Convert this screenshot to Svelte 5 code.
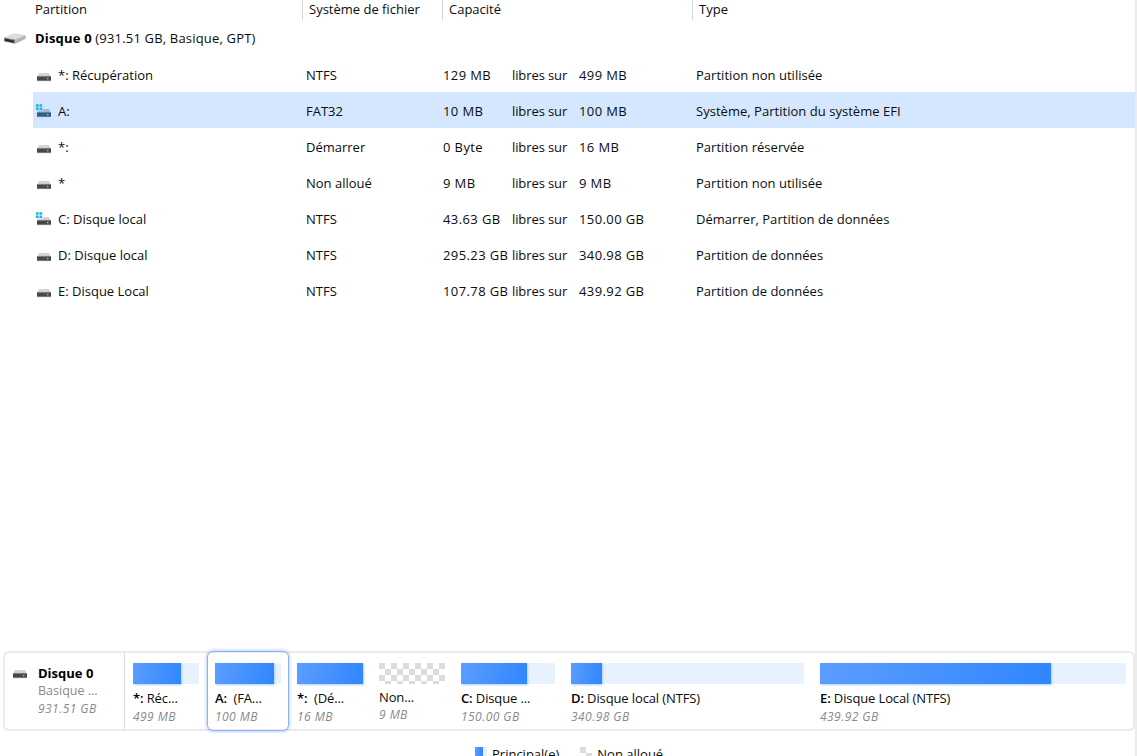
<script lang="ts">
	interface Partition {
		letter: string;
		name: string;
		fs: string;
		free: string;
		total: string;
		type: string;
		system?: boolean;
	}

	interface Block {
		letter: string;
		label: string;
		size: string;
		width: number;
		used: number;
		unallocated?: boolean;
	}

	const partitions: Partition[] = [
		{ letter: '*:', name: 'Récupération', fs: 'NTFS', free: '129 MB', total: '499 MB', type: 'Partition non utilisée' },
		{ letter: 'A:', name: '', fs: 'FAT32', free: '10 MB', total: '100 MB', type: 'Système, Partition du système EFI', system: true },
		{ letter: '*:', name: '', fs: 'Démarrer', free: '0 Byte', total: '16 MB', type: 'Partition réservée' },
		{ letter: '*', name: '', fs: 'Non alloué', free: '9 MB', total: '9 MB', type: 'Partition non utilisée' },
		{ letter: 'C:', name: 'Disque local', fs: 'NTFS', free: '43.63 GB', total: '150.00 GB', type: 'Démarrer, Partition de données', system: true },
		{ letter: 'D:', name: 'Disque local', fs: 'NTFS', free: '295.23 GB', total: '340.98 GB', type: 'Partition de données' },
		{ letter: 'E:', name: 'Disque Local', fs: 'NTFS', free: '107.78 GB', total: '439.92 GB', type: 'Partition de données' }
	];

	const blocks: Block[] = [
		{ letter: '*:', label: ' Réc...', size: '499 MB', width: 66, used: 48 },
		{ letter: 'A:', label: '  (FA...', size: '100 MB', width: 66, used: 59 },
		{ letter: '*:', label: '  (Dé...', size: '16 MB', width: 66, used: 66 },
		{ letter: '', label: 'Non...', size: '9 MB', width: 66, used: 0, unallocated: true },
		{ letter: 'C:', label: ' Disque ...', size: '150.00 GB', width: 94, used: 66 },
		{ letter: 'D:', label: ' Disque local (NTFS)', size: '340.98 GB', width: 233, used: 31 },
		{ letter: 'E:', label: ' Disque Local (NTFS)', size: '439.92 GB', width: 306, used: 231 }
	];

	let selected = $state(1);
</script>

{#snippet driveIcon(system: boolean, tinted: boolean)}
	<svg class="drive-icon" width="16" height="16" viewBox="0 0 16 16">
		<path d="M3 6H13L15 10H1Z" fill={tinted ? '#9fbdd4' : '#d3d5d5'} />
		<rect x="1" y="9.3" width="14" height="4.5" rx="0.6" fill={tinted ? '#315f7d' : '#444847'} />
		<path d="M1.3 9.4H14.7" stroke={tinted ? '#6c93ae' : '#8a8c8c'} stroke-width="0.6" />
		<path d="M1.5 13.7H14.5" stroke={tinted ? '#5683a0' : '#7b7e7e'} stroke-width="0.5" />
		<rect x="11" y="11" width="1.4" height="1.2" fill={tinted ? '#8be0e4' : '#8fe69a'} />
		{#if system}
			<rect x="0" y="1" width="7" height="6.5" fill={tinted ? '#d4e7ff' : '#ffffff'} />
			<path d="M0 1.2H2.7V3.7H0ZM3.5 1.2H6.2V3.7H3.5ZM0 4.5H2.7V7H0ZM3.5 4.5H6.2V7H3.5Z" fill="#1fb3df" />
		{/if}
	</svg>
{/snippet}

<div class="window">
	<div class="header">
		<span class="first">Partition</span>
		<span>Système de fichier</span>
		<span>Capacité</span>
		<span>Type</span>
	</div>

	<div class="disk">
		<svg width="24" height="16" viewBox="0 0 24 16">
			<path d="M1 7.4L11 3.2L22.6 5L12.5 9.6Z" fill="#dcdcdc" />
			<path d="M1 7.4L12.5 9.6V13.8L1.6 11.6Q1 11.4 1 11Z" fill="#8c8c8c" />
			<path d="M1.8 8.6L11.2 10.6V12.9L1.8 10.9Z" fill="#303030" />
			<path d="M12.5 9.6L22.6 5V8.8L12.5 13.8Z" fill="#b4b4b4" />
		</svg>
		<p><b>Disque 0</b> (931.51 GB, Basique, GPT)</p>
	</div>

	<div class="list">
		{#each partitions as p, i}
			<!-- svelte-ignore a11y_click_events_have_key_events, a11y_no_static_element_interactions -->
			<div class="row" class:active={i === selected} onclick={() => (selected = i)}>
				<span class="name">
					{@render driveIcon(!!p.system, i === selected)}
					<span>{p.letter} {p.name}</span>
				</span>
				<span>{p.fs}</span>
				<span class="amount">{p.free}</span>
				<span class="of">libres sur</span>
				<span class="amount">{p.total}</span>
				<span class="type">{p.type}</span>
			</div>
		{/each}
	</div>

	<div class="map">
		<div class="map-disk">
			{@render driveIcon(false, false)}
			<div class="map-info">
				<b>Disque 0</b>
				<span>Basique ...</span>
				<i>931.51 GB</i>
			</div>
		</div>
		<div class="blocks">
			{#each blocks as b, i}
				<!-- svelte-ignore a11y_click_events_have_key_events, a11y_no_static_element_interactions -->
				<div class="block" class:current={i === selected} class:unallocated={b.unallocated} onclick={() => (selected = i)}>
					<div class="bar" class:checker={b.unallocated} style="width: {b.width}px">
						{#if b.used}
							<div class="used" style="width: {b.used}px"></div>
						{/if}
					</div>
					<div class="label"><b>{b.letter}</b>{b.label}</div>
					<div class="size">{b.size}</div>
				</div>
			{/each}
		</div>
	</div>

	<div class="legend">
		<span class="item"><span class="swatch primary"></span>Principal(e)</span>
		<span class="item"><span class="swatch checker"></span>Non alloué</span>
	</div>
</div>

<style>
	:global(body) {
		background: #fff;
		overflow: hidden;
	}

	.window {
		box-sizing: border-box;
		width: 1137px;
		height: 756px;
		overflow: hidden;
		display: flex;
		flex-direction: column;
		border-right: 2px solid #ebebed;
		background: #fff;
		color: #0c0c0c;
		font-family: 'Open Sans', 'Noto Sans', sans-serif;
		font-size: 13px;
		line-height: 18px;
		white-space: nowrap;
		cursor: default;
	}

	.header {
		display: grid;
		grid-template-columns: 302px 140px 250px 1fr;
		height: 20px;
	}

	.header span {
		border-left: 1px solid #d5d5d5;
		padding-left: 6px;
	}

	.header .first {
		border-left: 0;
		padding-left: 35px;
	}

	.disk {
		display: flex;
		align-items: center;
		gap: 8px;
		height: 36px;
		padding-left: 3px;
	}

	.disk p {
		margin: 0;
		letter-spacing: 0.18px;
	}

	.disk b,
	.map-info b {
		color: #000;
		font-weight: 700;
	}

	.list {
		flex: 1;
		padding-left: 33px;
	}

	.row {
		box-sizing: border-box;
		display: grid;
		grid-template-columns: 273px 137px 69px 67px 117px 1fr;
		align-items: center;
		height: 36px;
		padding-top: 2px;
	}

	.row.active {
		background: #d4e7ff;
	}

	.name {
		display: flex;
		align-items: center;
		gap: 6px;
		padding-left: 3px;
	}

	.amount {
		letter-spacing: 0.4px;
	}

	.of {
		letter-spacing: -0.1px;
	}

	.type {
		letter-spacing: 0.03px;
	}

	.drive-icon {
		flex: none;
	}

	.map {
		box-sizing: border-box;
		display: flex;
		width: 1132px;
		height: 80px;
		margin-left: 3px;
		border: 2px solid #e9eaec;
		border-radius: 6px;
	}

	.map-disk {
		box-sizing: border-box;
		display: flex;
		flex: none;
		gap: 10px;
		width: 120px;
		padding: 11px 0 0 7px;
		border-right: 1px solid #d8dde2;
	}

	.map-info {
		display: flex;
		flex-direction: column;
		color: #8a8a8a;
	}

	.map-info span {
		font-size: 12.5px;
	}

	.map-info i,
	.size {
		color: #8a8a8a;
		font-size: 12px;
		font-style: italic;
		letter-spacing: 0.45px;
	}

	.blocks {
		display: flex;
		flex: none;
		margin: -2px 0;
	}

	.block {
		box-sizing: border-box;
		flex: none;
		height: 80px;
		padding: 12px 8px 0;
		border-radius: 6px;
	}

	.block.current {
		box-shadow: inset 0 0 0 1px #8fb2ea, 0 0 3px 1px #b9d3fa;
	}

	.bar {
		height: 21px;
		background-color: #e8f2fe;
	}

	.used {
		height: 100%;
		background: linear-gradient(100deg, #5c9dff, #3086ff);
		box-shadow: 1px 1px 2px #a9cfff;
	}

	.checker {
		background: repeating-conic-gradient(#dcdcdc 0 25%, #fff 0 50%) 6px 0 / 12px 12px;
	}

	.label {
		margin-top: 5px;
		letter-spacing: -0.12px;
		white-space: pre;
	}

	.label b {
		color: #000;
		font-weight: 600;
	}

	.unallocated .label {
		margin-top: 4px;
	}

	.legend {
		display: flex;
		gap: 21px;
		height: 25px;
		padding: 14px 0 0 475px;
		box-sizing: border-box;
	}

	.item {
		display: flex;
		gap: 5px;
	}

	.swatch {
		width: 12px;
		height: 12px;
		margin-top: 2px;
	}

	.primary {
		background: linear-gradient(90deg, #5c9dff, #3086ff 8px, #e8f2fe 8px);
	}

	.size {
		margin-top: 1px;
	}

	.unallocated .size {
		margin-top: 0;
	}
</style>
